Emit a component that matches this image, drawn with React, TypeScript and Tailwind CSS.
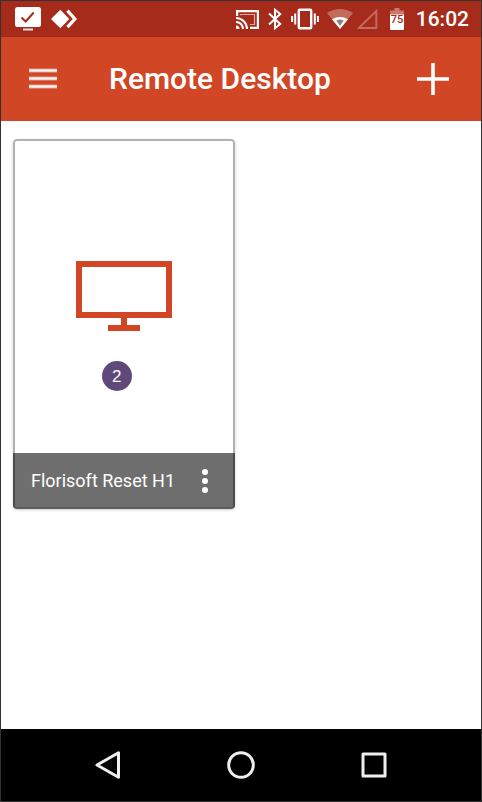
import React from "react";

function CheckScreenIcon() {
  return (
    <svg width="26" height="24" viewBox="0 0 26 24" aria-hidden="true">
      <rect width="26" height="20" rx="2.5" fill="#fff" />
      <path d="M6.5 10.5l4.2 4 8-9" fill="none" stroke="#a72b1b" strokeWidth="2" />
      <path d="M8 22.5h10" stroke="#fff" strokeWidth="2" opacity=".85" />
    </svg>
  );
}

function DiamondIcon() {
  return (
    <svg width="26" height="20" viewBox="0 0 26 20" aria-hidden="true" fill="#fff">
      <path d="M9.3 .7L18.3 10l-9 9.2L0 10z" />
      <path d="M15.2 2.8L17.7 .5 26 10l-8.3 9.3-2.5-2.4L21.8 10z" />
    </svg>
  );
}

function CastIcon() {
  return (
    <svg width="23" height="19" viewBox="0 0 23 19" aria-hidden="true" fill="none" stroke="#fff">
      <path d="M4.5 5.2V4.5h14v10h-4.5" strokeWidth="1.2" opacity=".6" />
      <path d="M1.1 6V1.1h20.8v16.8H14" strokeWidth="2.2" />
      <path d="M0 8a11 11 0 0 1 11 11M0 12a7 7 0 0 1 7 7" strokeWidth="2" />
      <path d="M0 15.5a3.5 3.5 0 0 1 3.5 3.5H0z" fill="#fff" stroke="none" />
    </svg>
  );
}

function BluetoothIcon() {
  return (
    <svg width="14" height="22" viewBox="0 0 14 22" aria-hidden="true" fill="none" stroke="#fff" strokeWidth="2">
      <path d="M1 5.5L12.2 16l-5.2 4.2V1.8L12.2 6 1 16.5" />
    </svg>
  );
}

function VibrateIcon() {
  return (
    <svg width="28" height="22" viewBox="0 0 28 22" aria-hidden="true" fill="none" stroke="#fff">
      <rect x="7.8" y="1.8" width="12.4" height="18.4" rx="1" strokeWidth="2.4" />
      <path d="M4.2 5.5v11M23.8 5.5v11M1.1 8v6M26.9 8v6" strokeWidth="2" />
    </svg>
  );
}

function WifiIcon() {
  return (
    <svg width="26" height="20" viewBox="0 0 26 20" aria-hidden="true" fill="#fff">
      <path d="M0 4Q13-4 26 4L13 20z" opacity=".3" />
      <path d="M5 10.2Q13 5.6 21 10.2L13 20z" />
      <path d="M9.3 11.4Q13 9.8 16.7 11.4L13 17z" fill="#8b8380" />
    </svg>
  );
}

function SignalIcon() {
  return (
    <svg width="21" height="20" viewBox="0 0 21 20" aria-hidden="true">
      <path d="M2 18.9L19.3 2v16.9z" fill="none" stroke="#c36a5f" strokeWidth="2" />
    </svg>
  );
}

function BatteryIcon() {
  return (
    <svg width="14" height="22" viewBox="0 0 14 22" aria-hidden="true">
      <path d="M0 7V3.5Q0 2.5 1 2.5h3.5V0h5v2.5H13q1 0 1 1V7z" fill="#c9786e" />
      <path d="M0 6.5h14V21q0 1-1 1H1q-1 0-1-1z" fill="#fff" />
      <text x="7" y="15" textAnchor="middle" fontSize="11" fontWeight="500" fontFamily="Roboto, sans-serif" fill="#a72b1b">75</text>
    </svg>
  );
}

function StatusBar() {
  return (
    <div className="flex h-9 items-center justify-between bg-[#a72b1b] pr-3 pl-3.5 text-white">
      <div className="flex items-center gap-2.5">
        <CheckScreenIcon />
        <DiamondIcon />
      </div>
      <div className="flex items-center">
        <div className="flex items-center gap-[9px]">
          <CastIcon />
          <BluetoothIcon />
          <VibrateIcon />
        </div>
        <div className="ml-2 flex items-center gap-1">
          <WifiIcon />
          <SignalIcon />
        </div>
        <div className="ml-3 flex items-center gap-3">
          <BatteryIcon />
          <time className="text-[21px] leading-6 font-medium">16:02</time>
        </div>
      </div>
    </div>
  );
}

function AppBar() {
  return (
    <header className="flex h-21 items-center bg-[#d14625] pr-7 pl-7 text-white">
      <button type="button" aria-label="Menu" className="flex w-20 shrink-0 items-center">
        <svg width="28" height="22" viewBox="0 0 28 22" aria-hidden="true" fill="#fff">
          <path d="M0 .5h28v4H0zM0 8.5h28v4H0zM0 16.5h28v4H0z" opacity=".5" />
          <path d="M0 1.5h28v2H0zM0 9.5h28v2H0zM0 17.5h28v2H0z" />
        </svg>
      </button>
      <h1 className="flex-1 text-[30px] leading-10 font-medium">Remote Desktop</h1>
      <button type="button" aria-label="Add connection" className="flex w-10 items-center justify-center">
        <svg width="32" height="32" viewBox="0 0 32 32" aria-hidden="true" stroke="#fff" strokeWidth="3.6">
          <path d="M16 0v32M0 16h32" />
        </svg>
      </button>
    </header>
  );
}

function DesktopCard({ name, step }: { name: string; step: number }) {
  return (
    <article className="relative flex aspect-3/5 flex-col overflow-hidden rounded-sm bg-white shadow-[0_1px_3px_rgba(0,0,0,0.2)]">
      <button type="button" aria-label={`Connect to ${name}`} className="flex flex-1 items-center justify-center">
        <svg width="96" height="70" viewBox="0 0 96 70" aria-hidden="true" fill="#d14625">
          <path fillRule="evenodd" d="M0 0h96v57H0zM6 6v45h84V6z" />
          <path d="M45 57h6v7h13v6H32v-6h13z" />
        </svg>
      </button>
      <footer className="flex h-14 items-center justify-between bg-[#6e6e6e] pr-4 pl-[18px] text-white">
        <h2 className="text-lg whitespace-nowrap">{name}</h2>
        <button type="button" aria-label="More options" className="flex w-7 justify-center">
          <svg width="6" height="24" viewBox="0 0 6 24" aria-hidden="true" fill="#fff">
            <circle cx="3" cy="3" r="3" />
            <circle cx="3" cy="12" r="3" />
            <circle cx="3" cy="21" r="3" />
          </svg>
        </button>
      </footer>
      <span className="absolute top-[60%] left-[40%] flex size-[30px] items-center justify-center rounded-full bg-[#5f497a] text-[17px] leading-none text-white [font-family:'Liberation_Sans',sans-serif]">
        {step}
      </span>
      <div className="pointer-events-none absolute inset-0 rounded-sm border-2 border-black/30 border-b-black/15" />
    </article>
  );
}

function NavigationBar() {
  return (
    <nav className="flex h-18 items-center bg-black px-10" aria-label="System navigation">
      <button type="button" aria-label="Back" className="flex flex-1 justify-center">
        <svg width="28" height="28" viewBox="0 0 28 28" aria-hidden="true" fill="none" stroke="#eee" strokeWidth="3" strokeLinejoin="round">
          <path d="M3 14L24.5 1.7v24.6z" />
        </svg>
      </button>
      <button type="button" aria-label="Home" className="flex flex-1 justify-center">
        <svg width="28" height="28" viewBox="0 0 28 28" aria-hidden="true" fill="none" stroke="#eee" strokeWidth="3">
          <circle cx="14" cy="14" r="12.3" />
        </svg>
      </button>
      <button type="button" aria-label="Recent apps" className="flex flex-1 justify-center">
        <svg width="26" height="26" viewBox="0 0 26 26" aria-hidden="true" fill="none" stroke="#eee" strokeWidth="3" strokeLinejoin="round">
          <rect x="2" y="2" width="22" height="22" />
        </svg>
      </button>
    </nav>
  );
}

export default function App() {
  return (
    <div className="flex min-h-screen flex-col border border-[#333] bg-white [font-family:Roboto,sans-serif]">
      <StatusBar />
      <AppBar />
      <main className="grid flex-1 grid-cols-2 content-start gap-3 px-3 pt-[18px]">
        <DesktopCard name="Florisoft Reset H1" step={2} />
      </main>
      <NavigationBar />
    </div>
  );
}
